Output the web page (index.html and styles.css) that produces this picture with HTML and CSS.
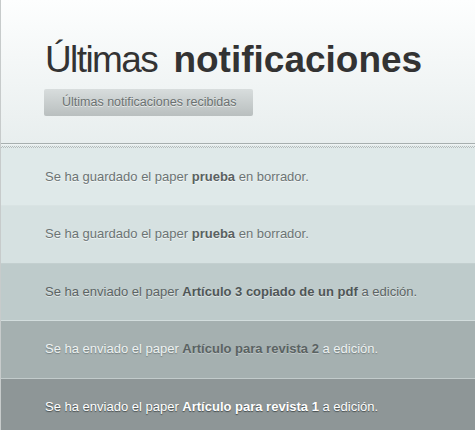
FILE: index.html
```html
<!DOCTYPE html>
<html lang="es">
<head>
<meta charset="utf-8">
<title>Últimas notificaciones</title>
<link rel="stylesheet" href="styles.css">
</head>
<body>
<div class="page">
  <header class="header">
    <h1 class="title"><span class="light">Últimas</span> <strong>notificaciones</strong></h1>
    <span class="tag">Últimas notificaciones recibidas</span>
  </header>
  <div class="divider"></div>
  <ul class="list">
    <li class="item item-1">Se ha guardado el paper <b>prueba</b> en borrador.</li>
    <li class="item item-2">Se ha guardado el paper <b>prueba</b> en borrador.</li>
    <li class="item item-3">Se ha enviado el paper <b>Artículo 3 copiado de un pdf</b> a edición.</li>
    <li class="item item-4">Se ha enviado el paper <b>Artículo para revista 2</b> a edición.</li>
    <li class="item item-5">Se ha enviado el paper <b>Artículo para revista 1</b> a edición.</li>
  </ul>
</div>
</body>
</html>
```

FILE: styles.css
```css
html, body {
  margin: 0;
  padding: 0;
  background: #8e9697;
}
.page {
  width: 475px;
  height: 430px;
  overflow: hidden;
  font-family: "Liberation Sans", Arial, sans-serif;
  border-left: 1px solid rgba(255,255,255,0.5);
  box-sizing: border-box;
}
.header {
  height: 144px;
  box-sizing: border-box;
  padding: 41px 0 0 43px;
  background: linear-gradient(#fdfefe, #e8eeee);
  border-bottom: 1px solid #a7afaf;
}
.title {
  margin: 0 0 11px 1px;
  font-size: 37px;
  line-height: 37px;
  color: #333;
  font-weight: normal;
}
.title .light {
  letter-spacing: -1.6px;
  margin-right: 6px;
}
.title strong {
  font-weight: bold;
}
.tag {
  display: inline-block;
  height: 27px;
  line-height: 27px;
  padding: 0 17px 0 18px;
  font-size: 12.5px;
  color: #6b7171;
  text-shadow: 0 1px 0 rgba(255,255,255,0.6);
  background: linear-gradient(#d8dddd, #b9bfbf);
  border-radius: 2px;
}
.divider {
  height: 3px;
  background-color: #e6eded;
  background-image: conic-gradient(#b3bcbc 25%, transparent 0 50%, #b3bcbc 0 75%, transparent 0);
  background-size: 2px 2px;
  background-position: 0 1px;
  background-repeat: repeat-x;
  border-top: 1px solid #eef3f3;
}
.list {
  list-style: none;
  margin: 0;
  padding: 0;
}
.item {
  height: 57.5px;
  line-height: 56px;
  box-sizing: border-box;
  padding: 0 0 0 44px;
  font-size: 13px;
  white-space: nowrap;
  border-top: 1px solid transparent;
}
.item b {
  font-weight: bold;
}
.item-1 {
  background: #dfe9e9;
  color: #6c7474;
  text-shadow: 0 1px 0 rgba(255,255,255,0.6);
  border-top: 0;
  height: 57px;
  line-height: 57px;
}
.item-1 b, .item-2 b { color: #5a6161; }
.item-2 {
  background: #d6e1e1;
  border-top-color: #d9e3e3;
  color: #6c7474;
  text-shadow: 0 1px 0 rgba(255,255,255,0.6);
}
.item-3 {
  background: #becbcb;
  border-top-color: #c3cfcf;
  color: #5c6464;
  text-shadow: 0 1px 0 rgba(255,255,255,0.5);
}
.item-3 b { color: #4f5656; }
.item-4 {
  background: #a5b0b0;
  border-top-color: #d3dddd;
  color: #eef2f2;
  text-shadow: 0 1px 1px rgba(70,80,80,0.5);
}
.item-4 b { color: #5a6262; text-shadow: 0 1px 0 rgba(255,255,255,0.3); }
.item-5 {
  background: #8e9697;
  border-top-color: #c2cbcb;
  color: #ffffff;
  text-shadow: 0 1px 1px rgba(40,45,45,0.7);
}
```
